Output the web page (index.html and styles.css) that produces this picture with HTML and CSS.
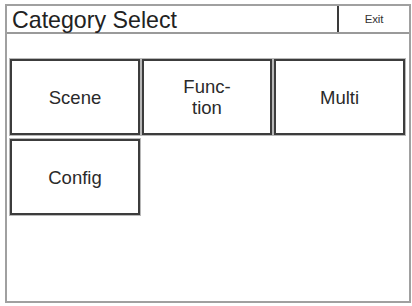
FILE: index.html
```html
<!DOCTYPE html>
<html>
<head>
<meta charset="utf-8">
<link rel="stylesheet" href="styles.css">
</head>
<body>
<div class="frame">
  <div class="header">
    <div class="title">Category Select</div>
    <div class="exit">Exit</div>
  </div>
  <div class="grid">
    <div class="btn">Scene</div>
    <div class="btn">Func-<br>tion</div>
    <div class="btn">Multi</div>
    <div class="btn">Config</div>
  </div>
</div>
</body>
</html>
```
FILE: styles.css
```css
html, body {
  margin: 0;
  padding: 0;
  background: #fff;
}
body {
  font-family: "Liberation Sans", Arial, sans-serif;
  color: #2a2a2a;
}
.frame {
  box-sizing: border-box;
  margin: 4px 0 0 5px;
  width: 406px;
  height: 299px;
  border: 2px solid #a0a0a0;
  background: #fff;
}
.header {
  display: flex;
  height: 26px;
  border-bottom: 2px solid #9a9a9a;
}
.title {
  flex: 1;
  font-size: 23.2px;
  line-height: 28px;
  padding-left: 5px;
  color: #222;
}
.exit {
  width: 70px;
  border-left: 2px solid #3a3a3a;
  font-size: 11.5px;
  line-height: 26px;
  text-align: center;
  color: #333;
  letter-spacing: -0.2px;
}
.grid {
  display: grid;
  grid-template-columns: 130px 130px 131px;
  grid-auto-rows: 76px;
  column-gap: 2px;
  row-gap: 4px;
  padding: 25px 0 0 3px;
}
.btn {
  box-sizing: border-box;
  border: 2px solid #3c3c3c;
  box-shadow: 0 0 0 1px #b8b8b8;
  display: flex;
  align-items: center;
  justify-content: center;
  text-align: center;
  font-size: 18.5px;
  line-height: 21px;
  color: #2a2a2a;
}
```
